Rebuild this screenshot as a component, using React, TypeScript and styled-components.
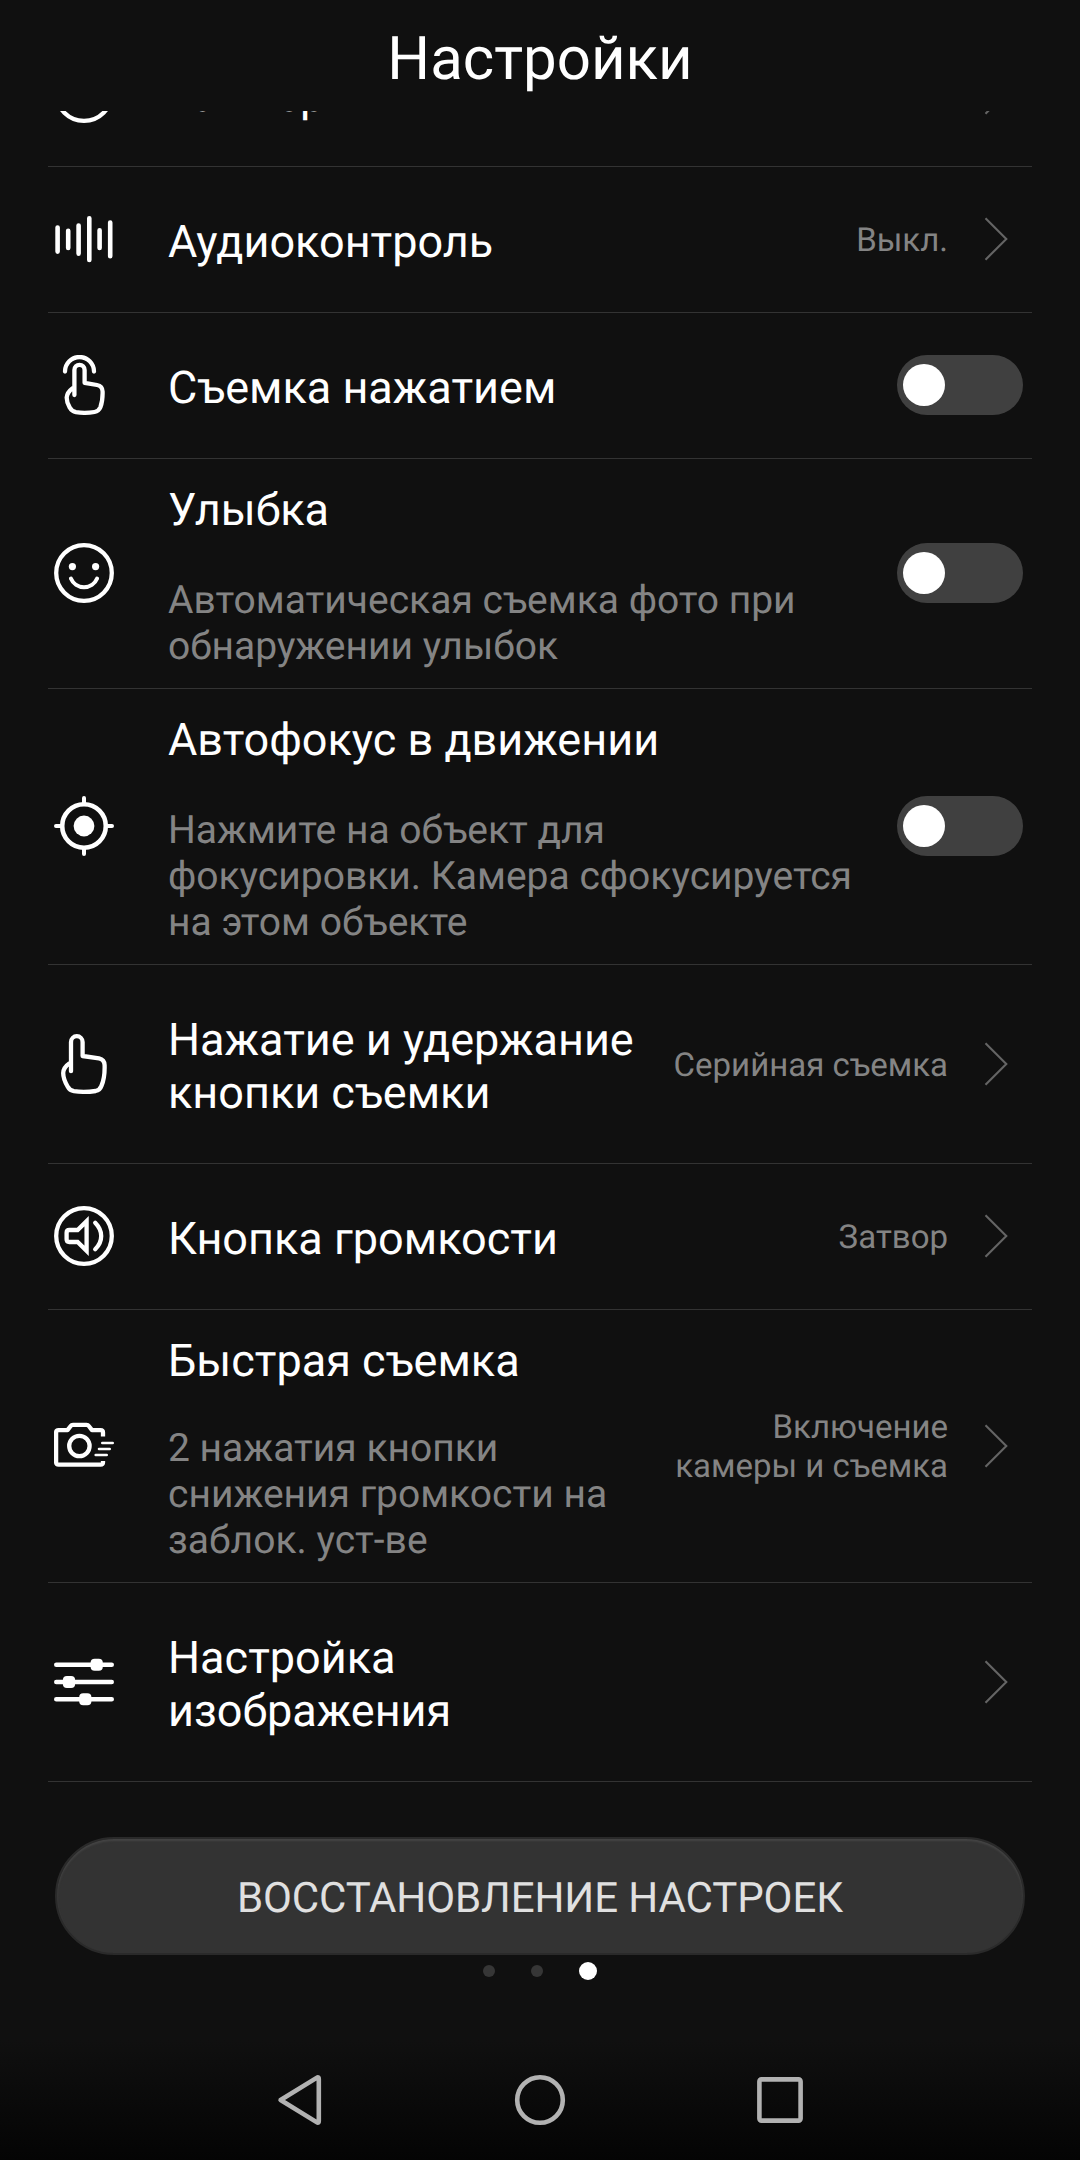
import React from "react";
import styled, { createGlobalStyle } from "styled-components";

const GlobalStyle = createGlobalStyle`
  * { box-sizing: border-box; }
  body {
    margin: 0;
    background: #101010;
    font-family: Roboto, "Noto Sans", sans-serif;
    text-rendering: geometricPrecision;
  }
`;

const Screen = styled.div`
  display: flex;
  flex-direction: column;
  width: 1080px;
  height: 2160px;
  overflow: hidden;
  background: linear-gradient(#101010 0, #101010 2040px, #040404 2160px);
`;

const Header = styled.header`
  flex: none;
  height: 111px;
  padding-top: 23px;
  text-align: center;
`;

const Title = styled.h1`
  margin: 0;
  font-size: 60px;
  line-height: 71px;
  font-weight: 400;
  color: #fff;
`;

const Viewport = styled.main`
  flex: none;
  height: 1671px;
  padding: 0 48px;
  overflow: hidden;
`;

const List = styled.ul`
  margin: -90px 0 0;
  padding: 0;
  list-style: none;
`;

const Row = styled.li<{ $height: number }>`
  display: flex;
  align-items: center;
  height: ${(p) => p.$height}px;
  padding: 0 9px 0 6px;
  border-bottom: 1px solid #333;
`;

const IconBox = styled.svg`
  flex: none;
  width: 60px;
  height: 60px;
  margin: 0 54px 1px 0;
  fill: none;
  stroke: #fff;
  stroke-width: 4.3;
  stroke-linecap: round;
  stroke-linejoin: round;
`;

const Texts = styled.div<{ $gap: number; $stacked: boolean }>`
  flex: 1;
  display: flex;
  flex-direction: column;
  gap: ${(p) => p.$gap}px;
  align-self: ${(p) => (p.$stacked ? "flex-start" : "center")};
  padding-top: ${(p) => (p.$stacked ? 24 : 4)}px;
  white-space: pre;
`;

const Label = styled.div`
  font-size: 45px;
  line-height: 53px;
  color: #fff;
`;

const Description = styled.div`
  font-size: 39px;
  line-height: 46px;
  color: #848484;
`;

const Value = styled.div`
  padding-top: 2px;
  margin-right: 36px;
  font-size: 33px;
  line-height: 39px;
  text-align: right;
  white-space: pre;
  color: #848484;
`;

const Chevron = styled.svg`
  flex: none;
  width: 24px;
  height: 44px;
  margin: 0 15px 1px 0;
  fill: none;
  stroke: #646464;
  stroke-width: 2.1;
`;

const Track = styled.button`
  flex: none;
  display: flex;
  align-items: center;
  width: 126px;
  height: 60px;
  margin: 0 0 1px;
  padding: 0 6px;
  border: 0;
  border-radius: 30px;
  background: #404040;
`;

const Knob = styled.span`
  width: 42px;
  height: 42px;
  border-radius: 50%;
  background: #fff;
`;

const Footer = styled.footer`
  display: flex;
  flex-direction: column;
  align-items: center;
  padding: 55px 55px 0;
`;

const ResetButton = styled.button`
  width: 970px;
  height: 118px;
  padding: 4px 0 0;
  border: 2px solid #2a2a2a;
  border-radius: 59px;
  background: #333;
  box-shadow: inset 0 2px 2px #444;
  font-family: inherit;
  font-size: 42px;
  line-height: 49px;
  letter-spacing: -0.1px;
  color: #e0e0e0;
  text-rendering: inherit;
`;

const Pager = styled.div`
  display: flex;
  align-items: center;
  gap: 36px;
  height: 18px;
  margin-top: 7px;
`;

const Dot = styled.span<{ $active?: boolean }>`
  width: ${(p) => (p.$active ? 18 : 12)}px;
  height: ${(p) => (p.$active ? 18 : 12)}px;
  border-radius: 50%;
  background: ${(p) => (p.$active ? "#fff" : "#363636")};
`;

const NavBar = styled.nav`
  display: flex;
  justify-content: center;
  gap: 180px;
  margin-top: auto;
  padding-bottom: 30px;
`;

const NavIcon = styled.svg`
  width: 60px;
  height: 60px;
  fill: none;
  stroke: #b2b2b2;
  stroke-width: 4.6;
  stroke-linejoin: round;
`;

const icons = {
  timer: (
    <>
      <circle cx="30" cy="30" r="27.8" />
      <path d="M30 14V30L40 36" />
    </>
  ),
  audio: (
    <path
      strokeWidth="4.6"
      d="M3.6 18.5V42.6M14.2 21.8V39M24.6 16.5V44.6M35.3 9.2V51M45.6 21.2V39M56.2 13.5V47.3"
    />
  ),
  tap: (
    <>
      <path d="M11 16.5a14.5 14.5 0 0 1 29 0" />
      <path d="M20.4 40V15a5.1 5.1 0 0 1 10.2 0V27.8L43 30Q48.4 31 48.6 36.5Q48.8 46 46.4 52.3Q44.8 56.2 40.5 57Q31 58.6 22 57.2Q17.8 56.4 15.7 52.5Q12.6 47.5 12.7 42.5Q13 37.5 18.6 33.2" />
    </>
  ),
  smile: (
    <>
      <circle cx="30" cy="30" r="27.8" />
      <path strokeWidth="4" d="M16.9 35.6a14.2 14.2 0 0 0 26.2 0" />
      <g fill="#fff" stroke="none">
        <circle cx="18.4" cy="23.6" r="3.6" />
        <circle cx="41.6" cy="23.6" r="3.6" />
      </g>
    </>
  ),
  focus: (
    <>
      <circle cx="30" cy="30" r="21.8" strokeWidth="4.6" />
      <circle cx="30" cy="30" r="10.4" fill="#fff" stroke="none" />
      <path strokeWidth="4" d="M30 2V7M30 53V58M2 30H7M53 30H58" />
    </>
  ),
  hold: (
    <path d="M17 37.2V8a5.8 5.8 0 0 1 11.6 0V22L45 24.3Q50.4 25.5 50.6 31Q51 44 47.4 52Q46 56 41.6 57Q30 58.6 20 57.2Q15.6 56.4 13.6 52.5Q9.2 45 9.2 39Q9.4 33.5 15.2 29.5" />
  ),
  volume: (
    <>
      <circle cx="30" cy="30" r="27.8" />
      <path
        strokeLinejoin="miter"
        strokeMiterlimit="3"
        d="M15.3 24H23.6L32.6 15.2V44.8L23.6 36H15.3Q12.6 36 12.6 33.3V26.7Q12.6 24 15.3 24Z"
      />
      <path d="M41.2 16.8Q47.2 23 47.2 30Q47.2 37.5 41.2 43.2" />
    </>
  ),
  camera: (
    <>
      <path
        strokeLinecap="butt"
        d="M49 20.6V16.5Q49 14.1 46.6 14.1H38L34.8 10Q34 8.8 32.5 8.8H19Q17.5 8.8 16.7 10L13.5 14.1H4.6Q2.1 14.1 2.1 16.6V46.2Q2.1 48.6 4.6 48.6H46.6Q49 48.6 49 46.6V45"
      />
      <circle cx="25.4" cy="30" r="10.2" />
      <path strokeWidth="2.6" d="M48.3 27H58.7M45 33H55.7M41.7 39H52.7" />
    </>
  ),
  sliders: (
    <>
      <path strokeWidth="4.6" d="M2.3 12.7H57.7M2.3 30H57.7M2.3 47.3H57.7" />
      <g fill="#fff" stroke="none">
        <rect x="36.6" y="6.7" width="12.2" height="12" rx="4" />
        <rect x="8.9" y="24" width="12.2" height="12" rx="4" />
        <rect x="25.2" y="41.3" width="12.2" height="12" rx="4" />
      </g>
    </>
  ),
};

type Setting = {
  icon: keyof typeof icons;
  label: string;
  height: number;
  description?: string;
  gap?: number;
  value?: string;
  toggle?: boolean;
};

const settings: Setting[] = [
  { icon: "timer", label: "Таймер", height: 146, value: "Выкл." },
  { icon: "audio", label: "Аудиоконтроль", height: 146, value: "Выкл." },
  { icon: "tap", label: "Съемка нажатием", height: 146, toggle: true },
  {
    icon: "smile",
    label: "Улыбка",
    height: 230,
    description: "Автоматическая съемка фото при\nобнаружении улыбок",
    toggle: true,
  },
  {
    icon: "focus",
    label: "Автофокус в движении",
    height: 276,
    description: "Нажмите на объект для\nфокусировки. Камера сфокусируется\nна этом объекте",
    toggle: true,
  },
  {
    icon: "hold",
    label: "Нажатие и удержание\nкнопки съемки",
    height: 199,
    value: "Серийная съемка",
  },
  { icon: "volume", label: "Кнопка громкости", height: 146, value: "Затвор" },
  {
    icon: "camera",
    label: "Быстрая съемка",
    height: 273,
    description: "2 нажатия кнопки\nснижения громкости на\nзаблок. уст-ве",
    gap: 38,
    value: "Включение\nкамеры и съемка",
  },
  { icon: "sliders", label: "Настройка\nизображения", height: 199 },
];

function SettingRow({ icon, label, height, description, gap = 41, value, toggle }: Setting) {
  return (
    <Row $height={height}>
      <IconBox viewBox="0 0 60 60">{icons[icon]}</IconBox>
      <Texts $gap={gap} $stacked={Boolean(description)}>
        <Label>{label}</Label>
        {description && <Description>{description}</Description>}
      </Texts>
      {value && <Value>{value}</Value>}
      {toggle ? (
        <Track role="switch" aria-checked={false} aria-label={label}>
          <Knob />
        </Track>
      ) : (
        <Chevron viewBox="0 0 24 44">
          <path d="M1.5 1.3L22.3 22L1.5 42.7" />
        </Chevron>
      )}
    </Row>
  );
}

export default function App() {
  return (
    <>
      <GlobalStyle />
      <Screen>
        <Header>
          <Title>Настройки</Title>
        </Header>
        <Viewport>
          <List>
            {settings.map((s) => (
              <SettingRow key={s.label} {...s} />
            ))}
          </List>
        </Viewport>
        <Footer>
          <ResetButton>ВОССТАНОВЛЕНИЕ НАСТРОЕК</ResetButton>
          <Pager>
            <Dot />
            <Dot />
            <Dot $active />
          </Pager>
        </Footer>
        <NavBar>
          <NavIcon viewBox="0 0 60 60">
            <path d="M10.6 30L47.4 7.4Q48.8 7.4 48.8 9V51Q48.8 52.6 47.4 52.6Z" />
          </NavIcon>
          <NavIcon viewBox="0 0 60 60">
            <circle cx="30" cy="30" r="22.8" />
          </NavIcon>
          <NavIcon viewBox="0 0 60 60">
            <rect x="9.4" y="9.4" width="41.2" height="41.2" rx="2" />
          </NavIcon>
        </NavBar>
      </Screen>
    </>
  );
}
